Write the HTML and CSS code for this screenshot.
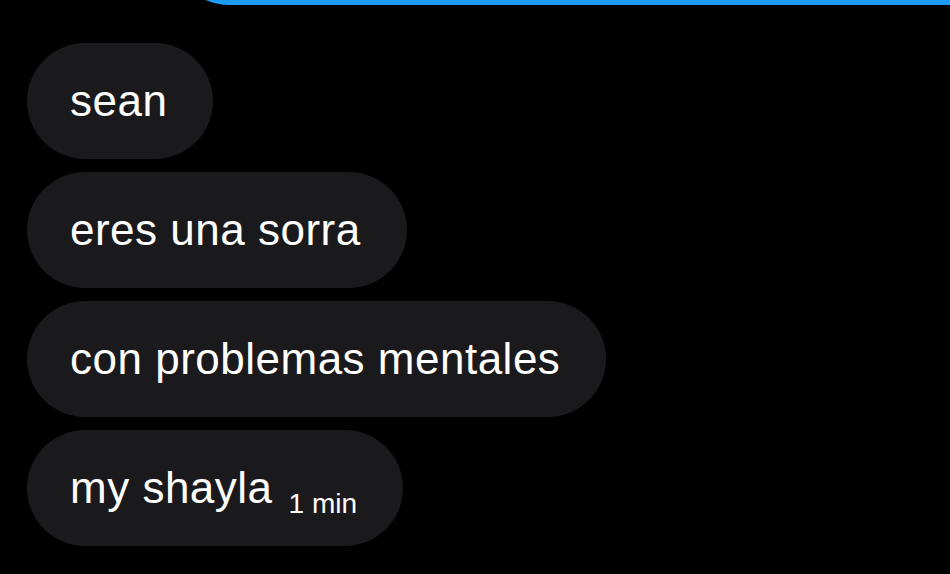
FILE: index.html
```html
<!DOCTYPE html>
<html>
<head>
<meta charset="utf-8">
<link rel="stylesheet" href="styles.css">
</head>
<body>
<div class="thread">
  <div class="sent-tail"></div>
  <div class="msg"><span class="text">sean</span></div>
  <div class="msg"><span class="text">eres una sorra</span></div>
  <div class="msg"><span class="text">con problemas mentales</span></div>
  <div class="msg"><span class="text">my shayla</span><span class="time">1 min</span></div>
</div>
</body>
</html>
```
FILE: styles.css
```css
html, body {
  margin: 0;
  padding: 0;
  background: #000;
  width: 950px;
  height: 574px;
  overflow: hidden;
}
.thread {
  display: flex;
  flex-direction: column;
  align-items: flex-start;
  gap: 13px;
  padding-left: 27px;
  font-family: "Liberation Sans", Arial, sans-serif;
}
.sent-tail {
  align-self: stretch;
  height: 116px;
  margin-top: -111px;
  margin-left: 144px;
  margin-bottom: 25px;
  border-radius: 58px 0 0 58px;
  background: #1d9bf0;
}
.msg {
  box-sizing: border-box;
  height: 116px;
  border-radius: 58px;
  background: #1a1a1c;
  padding: 0 46px 0 43px;
  display: flex;
  align-items: baseline;
  color: #fff;
}
.text {
  font-size: 44px;
  letter-spacing: 0.5px;
  line-height: 116px;
}
.time {
  font-size: 28px;
  margin-left: 16px;
  position: relative;
  top: 10px;
}
```
